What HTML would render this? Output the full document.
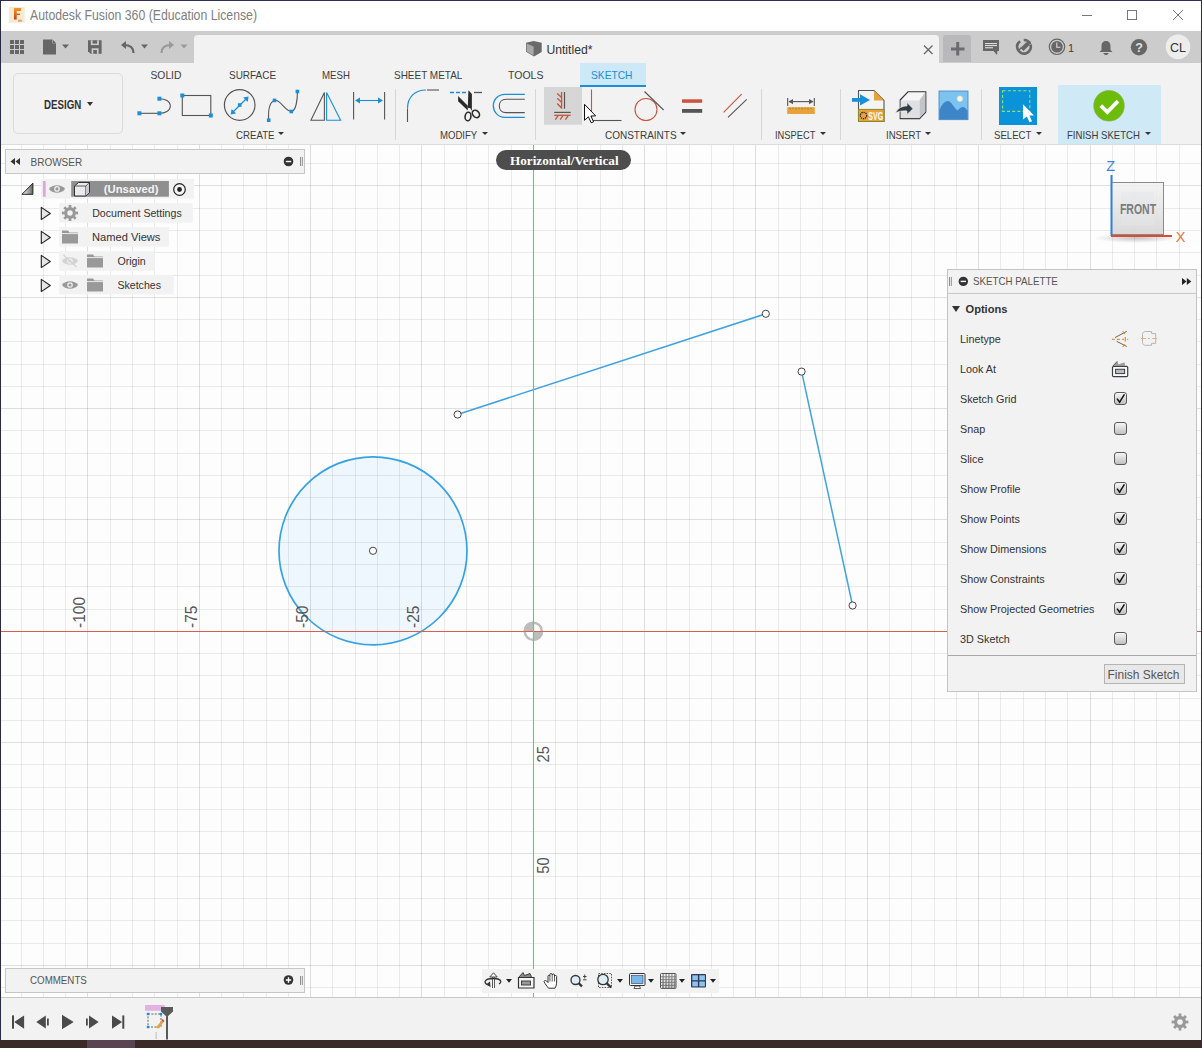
<!DOCTYPE html><html><head><meta charset="utf-8"><title>Fusion</title><style>
*{box-sizing:border-box}
html,body{margin:0;padding:0}
body{width:1202px;height:1048px;position:relative;overflow:hidden;background:#fff;font-family:"Liberation Sans",sans-serif;color:#333}
.a{position:absolute}
.t{position:absolute;white-space:nowrap;line-height:1}
.lbl{font-family:"Liberation Sans",sans-serif;font-size:16px;fill:#555}
.tab{font-size:10.3px;color:#3c3c3c;top:70.5px}
.grp{font-size:10.2px;color:#3c3c3c;top:131px}
.car{display:inline-block;width:0;height:0;border-left:3px solid transparent;border-right:3px solid transparent;border-top:4px solid #333;vertical-align:top;margin-left:3px;position:relative;top:3px}
.row{position:absolute;left:960px;font-size:10.8px;color:#333;white-space:nowrap;line-height:1}
.cb{position:absolute;left:1113.5px;width:13px;height:13px;border:1px solid #5a5a5a;border-radius:3px;background:linear-gradient(#f6f6f6,#c0c0c0)}
.br{position:absolute;font-size:10.6px;color:#333;white-space:nowrap;line-height:1}
</style></head><body>
<svg class="a" style="left:0;top:0" width="1202" height="1048" viewBox="0 0 1202 1048">
<rect x="0" y="145" width="1202" height="852" fill="#fdfdfd"/>
<circle cx="373" cy="550.8" r="94" fill="#eef7fe"/>
<path d="M21.5 145V997" stroke="#000" stroke-opacity="0.075"/>
<path d="M43.5 145V997" stroke="#000" stroke-opacity="0.075"/>
<path d="M65.5 145V997" stroke="#000" stroke-opacity="0.075"/>
<path d="M87.5 145V997" stroke="#000" stroke-opacity="0.12"/>
<path d="M110.5 145V997" stroke="#000" stroke-opacity="0.075"/>
<path d="M132.5 145V997" stroke="#000" stroke-opacity="0.075"/>
<path d="M154.5 145V997" stroke="#000" stroke-opacity="0.075"/>
<path d="M177.5 145V997" stroke="#000" stroke-opacity="0.075"/>
<path d="M199.5 145V997" stroke="#000" stroke-opacity="0.12"/>
<path d="M221.5 145V997" stroke="#000" stroke-opacity="0.075"/>
<path d="M243.5 145V997" stroke="#000" stroke-opacity="0.075"/>
<path d="M266.5 145V997" stroke="#000" stroke-opacity="0.075"/>
<path d="M288.5 145V997" stroke="#000" stroke-opacity="0.075"/>
<path d="M310.5 145V997" stroke="#000" stroke-opacity="0.12"/>
<path d="M332.5 145V997" stroke="#000" stroke-opacity="0.075"/>
<path d="M355.5 145V997" stroke="#000" stroke-opacity="0.075"/>
<path d="M377.5 145V997" stroke="#000" stroke-opacity="0.075"/>
<path d="M399.5 145V997" stroke="#000" stroke-opacity="0.075"/>
<path d="M421.5 145V997" stroke="#000" stroke-opacity="0.12"/>
<path d="M444.5 145V997" stroke="#000" stroke-opacity="0.075"/>
<path d="M466.5 145V997" stroke="#000" stroke-opacity="0.075"/>
<path d="M488.5 145V997" stroke="#000" stroke-opacity="0.075"/>
<path d="M511.5 145V997" stroke="#000" stroke-opacity="0.075"/>
<path d="M555.5 145V997" stroke="#000" stroke-opacity="0.075"/>
<path d="M577.5 145V997" stroke="#000" stroke-opacity="0.075"/>
<path d="M600.5 145V997" stroke="#000" stroke-opacity="0.075"/>
<path d="M622.5 145V997" stroke="#000" stroke-opacity="0.075"/>
<path d="M644.5 145V997" stroke="#000" stroke-opacity="0.12"/>
<path d="M666.5 145V997" stroke="#000" stroke-opacity="0.075"/>
<path d="M689.5 145V997" stroke="#000" stroke-opacity="0.075"/>
<path d="M711.5 145V997" stroke="#000" stroke-opacity="0.075"/>
<path d="M733.5 145V997" stroke="#000" stroke-opacity="0.075"/>
<path d="M755.5 145V997" stroke="#000" stroke-opacity="0.12"/>
<path d="M778.5 145V997" stroke="#000" stroke-opacity="0.075"/>
<path d="M800.5 145V997" stroke="#000" stroke-opacity="0.075"/>
<path d="M822.5 145V997" stroke="#000" stroke-opacity="0.075"/>
<path d="M845.5 145V997" stroke="#000" stroke-opacity="0.075"/>
<path d="M867.5 145V997" stroke="#000" stroke-opacity="0.12"/>
<path d="M889.5 145V997" stroke="#000" stroke-opacity="0.075"/>
<path d="M911.5 145V997" stroke="#000" stroke-opacity="0.075"/>
<path d="M934.5 145V997" stroke="#000" stroke-opacity="0.075"/>
<path d="M956.5 145V997" stroke="#000" stroke-opacity="0.075"/>
<path d="M978.5 145V997" stroke="#000" stroke-opacity="0.12"/>
<path d="M1000.5 145V997" stroke="#000" stroke-opacity="0.075"/>
<path d="M1023.5 145V997" stroke="#000" stroke-opacity="0.075"/>
<path d="M1045.5 145V997" stroke="#000" stroke-opacity="0.075"/>
<path d="M1067.5 145V997" stroke="#000" stroke-opacity="0.075"/>
<path d="M1090.5 145V997" stroke="#000" stroke-opacity="0.12"/>
<path d="M1112.5 145V997" stroke="#000" stroke-opacity="0.075"/>
<path d="M1134.5 145V997" stroke="#000" stroke-opacity="0.075"/>
<path d="M1156.5 145V997" stroke="#000" stroke-opacity="0.075"/>
<path d="M1179.5 145V997" stroke="#000" stroke-opacity="0.075"/>
<path d="M1201.5 145V997" stroke="#000" stroke-opacity="0.12"/>
<path d="M0 163.5H1202" stroke="#000" stroke-opacity="0.075"/>
<path d="M0 185.5H1202" stroke="#000" stroke-opacity="0.12"/>
<path d="M0 208.5H1202" stroke="#000" stroke-opacity="0.075"/>
<path d="M0 230.5H1202" stroke="#000" stroke-opacity="0.075"/>
<path d="M0 252.5H1202" stroke="#000" stroke-opacity="0.075"/>
<path d="M0 275.5H1202" stroke="#000" stroke-opacity="0.075"/>
<path d="M0 297.5H1202" stroke="#000" stroke-opacity="0.12"/>
<path d="M0 319.5H1202" stroke="#000" stroke-opacity="0.075"/>
<path d="M0 341.5H1202" stroke="#000" stroke-opacity="0.075"/>
<path d="M0 364.5H1202" stroke="#000" stroke-opacity="0.075"/>
<path d="M0 386.5H1202" stroke="#000" stroke-opacity="0.075"/>
<path d="M0 408.5H1202" stroke="#000" stroke-opacity="0.12"/>
<path d="M0 430.5H1202" stroke="#000" stroke-opacity="0.075"/>
<path d="M0 453.5H1202" stroke="#000" stroke-opacity="0.075"/>
<path d="M0 475.5H1202" stroke="#000" stroke-opacity="0.075"/>
<path d="M0 497.5H1202" stroke="#000" stroke-opacity="0.075"/>
<path d="M0 519.5H1202" stroke="#000" stroke-opacity="0.12"/>
<path d="M0 542.5H1202" stroke="#000" stroke-opacity="0.075"/>
<path d="M0 564.5H1202" stroke="#000" stroke-opacity="0.075"/>
<path d="M0 586.5H1202" stroke="#000" stroke-opacity="0.075"/>
<path d="M0 609.5H1202" stroke="#000" stroke-opacity="0.075"/>
<path d="M0 653.5H1202" stroke="#000" stroke-opacity="0.075"/>
<path d="M0 675.5H1202" stroke="#000" stroke-opacity="0.075"/>
<path d="M0 698.5H1202" stroke="#000" stroke-opacity="0.075"/>
<path d="M0 720.5H1202" stroke="#000" stroke-opacity="0.075"/>
<path d="M0 742.5H1202" stroke="#000" stroke-opacity="0.12"/>
<path d="M0 764.5H1202" stroke="#000" stroke-opacity="0.075"/>
<path d="M0 787.5H1202" stroke="#000" stroke-opacity="0.075"/>
<path d="M0 809.5H1202" stroke="#000" stroke-opacity="0.075"/>
<path d="M0 831.5H1202" stroke="#000" stroke-opacity="0.075"/>
<path d="M0 853.5H1202" stroke="#000" stroke-opacity="0.12"/>
<path d="M0 876.5H1202" stroke="#000" stroke-opacity="0.075"/>
<path d="M0 898.5H1202" stroke="#000" stroke-opacity="0.075"/>
<path d="M0 920.5H1202" stroke="#000" stroke-opacity="0.075"/>
<path d="M0 943.5H1202" stroke="#000" stroke-opacity="0.075"/>
<path d="M0 965.5H1202" stroke="#000" stroke-opacity="0.12"/>
<path d="M0 987.5H1202" stroke="#000" stroke-opacity="0.075"/>
<circle cx="373" cy="550.8" r="94" fill="none" stroke="#36a2e4" stroke-width="1.7"/>
<line x1="457.6" y1="414.5" x2="765.8" y2="313.8" stroke="#3fa3e0" stroke-width="1.5"/>
<line x1="801.6" y1="371.6" x2="852.6" y2="605.5" stroke="#3fa3e0" stroke-width="1.5"/>
<path d="M0 631.5H1202" stroke="#dd5c52" stroke-width="1"/>
<path d="M533.5 145V997" stroke="#62d05c" stroke-width="1.1"/>
<text transform="translate(85.1,628) rotate(-90) scale(0.97,1)" class="lbl">-100</text>
<text transform="translate(196.5,628) rotate(-90) scale(0.97,1)" class="lbl">-75</text>
<text transform="translate(307.8,628) rotate(-90) scale(0.97,1)" class="lbl">-50</text>
<text transform="translate(419.2,628) rotate(-90) scale(0.97,1)" class="lbl">-25</text>
<text transform="translate(549.3,762.4) rotate(-90) scale(0.92,1)" class="lbl">25</text>
<text transform="translate(549.3,873.8) rotate(-90) scale(0.92,1)" class="lbl">50</text>
<circle cx="373" cy="550.8" r="3.6" fill="#fff" stroke="#444" stroke-width="1"/>
<circle cx="457.6" cy="414.5" r="3.6" fill="#fff" stroke="#444" stroke-width="1"/>
<circle cx="765.8" cy="313.8" r="3.6" fill="#fff" stroke="#444" stroke-width="1"/>
<circle cx="801.6" cy="371.6" r="3.6" fill="#fff" stroke="#444" stroke-width="1"/>
<circle cx="852.6" cy="605.5" r="3.6" fill="#fff" stroke="#444" stroke-width="1"/>
<circle cx="533.3" cy="631.3" r="8.6" fill="none" stroke="#bdbdbd" stroke-width="2.4"/>
<path d="M533.3 631.3 V621.5 A9.8 9.8 0 0 0 523.5 631.3 Z M533.3 631.3 V641.0999999999999 A9.8 9.8 0 0 0 543.0999999999999 631.3 Z" fill="#bdbdbd"/>
<path d="M523.3 631.5 H543.3" stroke="#dd5c52" stroke-width="1"/><path d="M533.5 621.3 V641.3" stroke="#62d05c" stroke-width="1.1"/>
<defs><linearGradient id="cubeg" x1="0" y1="0" x2="0" y2="1"><stop offset="0" stop-color="#f2f2f2" stop-opacity="0.85"/><stop offset="1" stop-color="#d6d6d6" stop-opacity="0.9"/></linearGradient><radialGradient id="shad" cx="0.5" cy="0.5" r="0.5"><stop offset="0" stop-color="#000" stop-opacity="0.22"/><stop offset="1" stop-color="#000" stop-opacity="0"/></radialGradient></defs>
<ellipse cx="1136" cy="238" rx="42" ry="5" fill="url(#shad)"/>
<rect x="1111.5" y="182.5" width="52" height="52" fill="url(#cubeg)" stroke="#8a8a8a" stroke-width="1"/>
<rect x="1121" y="192" width="33" height="33" fill="#e2e5ea" fill-opacity="0.5"/>
<text x="1138" y="214.3" text-anchor="middle" font-family="Liberation Sans" font-weight="700" font-size="15" fill="#7c7c7c" transform="translate(1138 0) scale(0.70 1) translate(-1138 0)">FRONT</text>
<path d="M1111.5 175V236" stroke="#2f7fdc" stroke-width="2"/>
<path d="M1111 236H1172" stroke="#dc4a3a" stroke-width="2"/>
<text x="1110.8" y="171.2" text-anchor="middle" font-family="Liberation Sans" font-size="14.5" fill="#3a86e0">Z</text>
<text x="1180.5" y="241.5" text-anchor="middle" font-family="Liberation Sans" font-size="14.5" fill="#e8753a">X</text>
</svg>
<div class="a" style="left:0;top:0;width:1202px;height:31px;background:#fff"></div>
<div class="t" style="left:30px;top:8px;font-size:14px;color:#808080;transform-origin:0 0;transform:scaleX(0.876)">Autodesk Fusion 360 (Education License)</div>
<div class="a" style="left:1082px;top:15px;width:10px;height:1px;background:#777"></div>
<div class="a" style="left:1127px;top:10px;width:10px;height:10px;border:1px solid #777"></div>
<svg class="a" style="left:1172px;top:9px" width="12" height="12"><path d="M1 1L11 11M11 1L1 11" stroke="#777" stroke-width="1"/></svg>
<div class="a" style="left:0;top:31px;width:1202px;height:32px;background:#cbcccb"></div>
<div class="a" style="left:194px;top:35px;width:745px;height:28px;background:#f2f2f2;border-radius:4px 4px 0 0"></div>
<div class="a" style="left:943px;top:35px;width:28px;height:27px;background:#b9b9bb;border-radius:3px 3px 0 0"></div>
<div class="t" style="left:546.4px;top:43.5px;font-size:12.2px;color:#333">Untitled*</div>
<div class="a" style="left:0;top:63px;width:1202px;height:82px;background:#f2f2f2"></div>
<div class="a" style="left:12.5px;top:73px;width:110px;height:61px;border:1px solid #dadada;border-radius:5px;background:#f2f2f2"></div>
<div class="t" style="left:43.5px;top:99px;font-size:12px;font-weight:700;color:#333;transform-origin:0 0;transform:scaleX(0.81)">DESIGN</div>
<div class="a" style="left:87px;top:102px;width:0;height:0;border-left:3px solid transparent;border-right:3px solid transparent;border-top:4px solid #333"></div>
<div class="a" style="left:579.5px;top:63px;width:66px;height:24px;background:#cde8f6"></div>
<div class="a" style="left:579.5px;top:84.7px;width:66px;height:2.5px;background:#1a8fd6"></div>
<div class="t tab" style="left:150.5px;color:#3c3c3c;transform-origin:0 0;transform:scaleX(1.000)">SOLID</div>
<div class="t tab" style="left:228.7px;color:#3c3c3c;transform-origin:0 0;transform:scaleX(0.969)">SURFACE</div>
<div class="t tab" style="left:321.8px;color:#3c3c3c;transform-origin:0 0;transform:scaleX(0.936)">MESH</div>
<div class="t tab" style="left:394.2px;color:#3c3c3c;transform-origin:0 0;transform:scaleX(0.969)">SHEET METAL</div>
<div class="t tab" style="left:507.6px;color:#3c3c3c;transform-origin:0 0;transform:scaleX(1.020)">TOOLS</div>
<div class="t tab" style="left:591.4px;color:#1a8fd6;transform-origin:0 0;transform:scaleX(0.993)">SKETCH</div>
<div class="a" style="left:1058px;top:85px;width:103px;height:60px;background:#cfe9f6"></div>
<div class="t grp" style="left:235.5px;transform-origin:0 0;transform:scaleX(0.949)">CREATE</div>
<div class="a" style="left:278.3px;top:132.3px;width:0;height:0;border-left:3px solid transparent;border-right:3px solid transparent;border-top:3.8px solid #333"></div>
<div class="t grp" style="left:439.7px;transform-origin:0 0;transform:scaleX(0.940)">MODIFY</div>
<div class="a" style="left:481.6px;top:132.3px;width:0;height:0;border-left:3px solid transparent;border-right:3px solid transparent;border-top:3.8px solid #333"></div>
<div class="t grp" style="left:604.6px;transform-origin:0 0;transform:scaleX(0.980)">CONSTRAINTS</div>
<div class="a" style="left:680.1px;top:132.3px;width:0;height:0;border-left:3px solid transparent;border-right:3px solid transparent;border-top:3.8px solid #333"></div>
<div class="t grp" style="left:774.7px;transform-origin:0 0;transform:scaleX(0.915)">INSPECT</div>
<div class="a" style="left:819.5px;top:132.3px;width:0;height:0;border-left:3px solid transparent;border-right:3px solid transparent;border-top:3.8px solid #333"></div>
<div class="t grp" style="left:886.2px;transform-origin:0 0;transform:scaleX(0.944)">INSERT</div>
<div class="a" style="left:925.4px;top:132.3px;width:0;height:0;border-left:3px solid transparent;border-right:3px solid transparent;border-top:3.8px solid #333"></div>
<div class="t grp" style="left:993.8px;transform-origin:0 0;transform:scaleX(0.943)">SELECT</div>
<div class="a" style="left:1036px;top:132.3px;width:0;height:0;border-left:3px solid transparent;border-right:3px solid transparent;border-top:3.8px solid #333"></div>
<div class="t grp" style="left:1067.4px;transform-origin:0 0;transform:scaleX(0.940)">FINISH SKETCH</div>
<div class="a" style="left:1145px;top:132.3px;width:0;height:0;border-left:3px solid transparent;border-right:3px solid transparent;border-top:3.8px solid #333"></div>
<div class="a" style="left:395px;top:89px;width:1px;height:51px;background:#d6d6d6"></div>
<div class="a" style="left:535px;top:89px;width:1px;height:51px;background:#d6d6d6"></div>
<div class="a" style="left:761px;top:89px;width:1px;height:51px;background:#d6d6d6"></div>
<div class="a" style="left:840px;top:89px;width:1px;height:51px;background:#d6d6d6"></div>
<div class="a" style="left:980.5px;top:89px;width:1px;height:51px;background:#d6d6d6"></div>
<svg class="a" style="left:0;top:0" width="1202" height="145" viewBox="0 0 1202 145">
<rect x="10" y="40" width="4" height="4" fill="#666"/>
<rect x="10" y="45" width="4" height="4" fill="#666"/>
<rect x="10" y="50" width="4" height="4" fill="#666"/>
<rect x="15" y="40" width="4" height="4" fill="#666"/>
<rect x="15" y="45" width="4" height="4" fill="#666"/>
<rect x="15" y="50" width="4" height="4" fill="#666"/>
<rect x="20" y="40" width="4" height="4" fill="#666"/>
<rect x="20" y="45" width="4" height="4" fill="#666"/>
<rect x="20" y="50" width="4" height="4" fill="#666"/>
<path d="M43 39.5 H52.5 L56 43 V54.5 H43 Z" fill="#666"/><path d="M52.5 39.5 V43 H56" fill="#cbcccb" stroke="#cbcccb" stroke-width="0.6"/><path d="M52.6 39.8 L52.6 43 L55.8 43Z" fill="#666"/>
<path d="M62 44.5 H69 L65.5 48.5Z" fill="#666"/>
<path d="M88 40.3 H101.6 V53.8 H90.5 L88 51.3 Z" fill="#666"/><rect x="90.8" y="40.3" width="8.1" height="4.8" fill="#cbcccb"/><rect x="92.6" y="40.3" width="4.5" height="3.3" fill="#666"/><rect x="91.6" y="48.3" width="7" height="5.5" fill="#cbcccb"/><rect x="93.3" y="50" width="3.6" height="3.8" fill="#666"/>
<path d="M133.5 53 C133.5 47 130 45 124 45" fill="none" stroke="#666" stroke-width="2.2"/><path d="M121 45 L126 41 L126 49Z" fill="#666"/>
<path d="M141 44.5 H148 L144.5 48.5Z" fill="#666"/>
<path d="M161.5 53 C161.5 47 165 45 171 45" fill="none" stroke="#9a9a9a" stroke-width="2.2"/><path d="M174 45 L169 41 L169 49Z" fill="#9a9a9a"/>
<path d="M180.5 44.5 H187.5 L184 48.5Z" fill="#9a9a9a"/>
<path d="M526 42.7 L533.7 41 L541.7 42.7 V52 L534 56.5 L526 51.7 Z" fill="#6a6a6a"/><path d="M526.6 43.6 L533.6 46.6 V55.6 L526.6 51.4Z" fill="#a9a9a9"/>
<path d="M924 45.5 L932.5 54 M932.5 45.5 L924 54" stroke="#666" stroke-width="1.3"/>
<rect x="951" y="47.5" width="13.5" height="3" fill="#6c6c70"/><rect x="956.2" y="42" width="3" height="13.5" fill="#6c6c70"/>
<rect x="983" y="40" width="16" height="11" fill="#666"/><path d="M993 50.5 L997.5 50.5 L997 55Z" fill="#666"/><rect x="985" y="43" width="12" height="1.1" fill="#ddd"/><rect x="985" y="45" width="12" height="1.1" fill="#ddd"/><rect x="985" y="47.2" width="8" height="1.1" fill="#ddd"/>
<circle cx="1024" cy="46.8" r="6.8" fill="none" stroke="#666" stroke-width="2.6" stroke-dasharray="30 4 8 4" transform="rotate(-20 1024 46.8)"/>
<path d="M1020.5 48 L1026 42.5 L1030.5 41 L1029 45.5 L1023.5 51Z" fill="#666"/><path d="M1019 50 L1021.5 47.5" stroke="#666" stroke-width="1.5"/>
<circle cx="1057" cy="46.8" r="7.7" fill="none" stroke="#666" stroke-width="1.2"/><circle cx="1057" cy="46.8" r="5.8" fill="#666"/><path d="M1056.8 42.5 V47.3 H1060.5" fill="none" stroke="#ddd" stroke-width="1.1"/>
<text x="1068" y="52" font-family="Liberation Sans" font-size="11" fill="#4a3a3a">1</text>
<path d="M1099.5 52 L1101.5 50 L1101.5 46 C1101.5 42.5 1103.5 41 1106 41 C1108.5 41 1110.5 42.5 1110.5 46 L1110.5 50 L1112.5 52 Z" fill="#666"/><path d="M1103.5 53 H1108.5 C1108.5 54.5 1107 55 1106 55 C1105 55 1103.5 54.5 1103.5 53Z" fill="#666"/>
<circle cx="1139" cy="47.2" r="8.2" fill="#666"/><text x="1139" y="51.8" text-anchor="middle" font-family="Liberation Sans" font-weight="700" font-size="12.5" fill="#e0e0e0">?</text>
<circle cx="1178" cy="46.8" r="12.3" fill="#ededed"/><text x="1178" y="51.5" text-anchor="middle" font-family="Liberation Sans" font-size="12.5" fill="#333">CL</text>
<defs><linearGradient id="fg" x1="0" y1="0" x2="0" y2="1"><stop offset="0" stop-color="#f29a2a"/><stop offset="1" stop-color="#c83a1e"/></linearGradient></defs><rect x="9" y="7" width="15.7" height="15.7" fill="#f6ebcf"/><path d="M14 8 H21 V11 H16.7 V13.4 H20 V15.1 H16.7 V19.6 H14Z" fill="url(#fg)"/><rect x="18" y="19.7" width="4" height="2" fill="#e8a070"/>
<path d="M139.4 113.3 H159.4" stroke="#555" stroke-width="1.1"/><path d="M159.4 98.7 C165 98.7 170.3 101 170.3 106 C170.3 111 165 113.3 159.4 113.3" fill="none" stroke="#555" stroke-width="1.1"/>
<rect x="137.4" y="111.3" width="4" height="4" fill="#1a8fd6"/>
<rect x="157.4" y="111.3" width="4" height="4" fill="#1a8fd6"/>
<rect x="157.4" y="96.7" width="4" height="4" fill="#1a8fd6"/>
<rect x="182.3" y="95.5" width="28.5" height="20" fill="none" stroke="#555" stroke-width="1.1"/>
<rect x="180.3" y="93.5" width="4" height="4" fill="#1a8fd6"/>
<rect x="208.8" y="113.5" width="4" height="4" fill="#1a8fd6"/>
<circle cx="239.7" cy="105" r="15.3" fill="none" stroke="#555" stroke-width="1.2"/>
<path d="M232 113 L247.5 97.5" stroke="#1a8fd6" stroke-width="1.2"/><path d="M230.7 114.4 L231.6 109 L236.1 113.5Z" fill="#1a8fd6"/><path d="M248.6 96.5 L247.7 102 L243.2 97.4Z" fill="#1a8fd6"/>
<rect x="237.89999999999998" y="103.2" width="3.6" height="3.6" fill="#1a8fd6"/>
<path d="M268.7 120.2 C268 110 270 102 274.5 100.4 C280 99 285 111 291.3 111.5 C296 111 297.5 100 297.4 91.5" fill="none" stroke="#555" stroke-width="1.1"/>
<rect x="266.9" y="118.4" width="3.6" height="3.6" fill="#1a8fd6"/>
<rect x="272.7" y="98.60000000000001" width="3.6" height="3.6" fill="#1a8fd6"/>
<rect x="289.5" y="109.7" width="3.6" height="3.6" fill="#1a8fd6"/>
<rect x="295.59999999999997" y="89.7" width="3.6" height="3.6" fill="#1a8fd6"/>
<path d="M310.9 120.2 L324.4 92.6 L324.4 120.2 Z" fill="none" stroke="#555" stroke-width="1.1"/><path d="M326.6 120.2 L326.6 92.6 L340.6 120.2 Z" fill="none" stroke="#1a8fd6" stroke-width="1.1"/>
<path d="M353.6 92 V119.5 M384.6 92 V119.5" stroke="#555" stroke-width="1.1"/><path d="M356 100.5 H382" stroke="#1a8fd6" stroke-width="1.1"/><path d="M355 100.5 L360 97.5 L360 103.5Z M383 100.5 L378 97.5 L378 103.5Z" fill="#1a8fd6"/>
<path d="M407.5 122 V108.5" stroke="#555" stroke-width="1.1"/><path d="M407.5 108.5 C407.5 97 415 90 426 90" fill="none" stroke="#1a8fd6" stroke-width="1.2"/><path d="M427 90 H439" stroke="#555" stroke-width="1.1"/>
<path d="M450 92.5 H466" stroke="#1a8fd6" stroke-width="1.3" stroke-dasharray="4 2"/><path d="M474 92.5 H482" stroke="#555" stroke-width="1.3"/>
<path d="M468.4 90.2 L471.9 94 V110.4 L467.8 107.4Z" fill="#2a2a2a"/><path d="M458.1 96.1 L467.8 105.8 V110.4 L458.1 101.3Z" fill="#2a2a2a"/><circle cx="469.4" cy="109.5" r="1.4" fill="#f2f2f2"/>
<ellipse cx="468" cy="116.5" rx="2.9" ry="4.3" fill="none" stroke="#2a2a2a" stroke-width="1.6" transform="rotate(8 468 116.5)"/><ellipse cx="475.9" cy="113.9" rx="3.1" ry="4.1" fill="none" stroke="#2a2a2a" stroke-width="1.6" transform="rotate(-42 475.9 113.9)"/>
<path d="M524.8 94.4 H505 C498 94.4 493.3 99.5 493.3 105.8 C493.3 112 498 117.3 505 117.3 H524.8" fill="none" stroke="#1a8fd6" stroke-width="1.3"/>
<path d="M524.8 99.3 H506 C502 99.3 499.3 102 499.3 106 C499.3 110 502 112.6 506 112.6 H524.8" fill="none" stroke="#555" stroke-width="1.1"/>
<rect x="544" y="87" width="38" height="37.7" fill="#d6d6d6"/>
<path d="M561.6 91.9 V108.7" stroke="#c8553d" stroke-width="1.3"/><path d="M564.5 92 V108.7" stroke="#555" stroke-width="1.2"/>
<path d="M557.2 93.4 L561.6 97.5 M557.2 98.2 L561.6 102.3 M557.2 103.5 L561.6 108" stroke="#c8553d" stroke-width="1.4" fill="none"/>
<path d="M554.2 112.4 H570.7" stroke="#555" stroke-width="1.2"/><path d="M554.2 115.3 H570.7" stroke="#c8553d" stroke-width="1.3"/><path d="M555.3 119.6 L558 115.8 M560.2 119.6 L562.8 115.8 M565.4 119.6 L568 115.8" stroke="#c8553d" stroke-width="1.4"/>
<path d="M591.5 89.5 V120" stroke="#c8553d" stroke-width="1.1"/><path d="M591 120.5 H621.5" stroke="#555" stroke-width="1.1"/>
<path d="M584.5 104.3 L584.5 120.3 L588.4 116.8 L591.2 122.8 L593.6 121.8 L590.9 116 L595.7 115.9 Z" fill="#fff" stroke="#111" stroke-width="1"/>
<circle cx="646" cy="109.5" r="11" fill="none" stroke="#c8553d" stroke-width="1.1"/><path d="M644.5 91.5 L663.6 110" stroke="#555" stroke-width="1.1"/>
<rect x="682" y="99.3" width="20.2" height="3.5" fill="#c8553d"/><rect x="682" y="109" width="20.2" height="3.8" fill="#555"/>
<path d="M723.6 112.4 L741.6 94.2" stroke="#c8553d" stroke-width="1.1"/><path d="M728 117.3 L746.7 99.3" stroke="#555" stroke-width="1.1"/>
<rect x="787.2" y="107.2" width="27.6" height="6.8" fill="#e8a23a"/>
<path d="M790 107.5 V109.5 M793 107.5 V109 M796 107.5 V109.5 M799 107.5 V109 M802 107.5 V109.5 M805 107.5 V109 M808 107.5 V109.5 M811 107.5 V109" stroke="#a8701a" stroke-width="0.8"/>
<path d="M787.7 98 V106 M814.3 98 V106" stroke="#555" stroke-width="1.1"/><path d="M789 101.6 H813" stroke="#555" stroke-width="1.1"/><path d="M788.5 101.6 L793 99 L793 104.2Z M813.5 101.6 L809 99 L809 104.2Z" fill="#555"/>
<path d="M858.5 90.5 H874 L884 100.5 V121.5 H858.5 Z" fill="#f4f4f4" stroke="#555" stroke-width="1.1"/>
<path d="M874 90.5 L884 100.5 H874Z" fill="#e8a23a"/>
<rect x="858.5" y="109.4" width="25.5" height="12.1" fill="#e8a23a" stroke="#8a8a2a" stroke-width="1"/>
<text x="868.3" y="120.2" font-family="Liberation Sans" font-weight="700" font-size="10" fill="#fff" transform="translate(868.3 0) scale(0.7 1) translate(-868.3 0)">SVG</text>
<circle cx="863.5" cy="115.5" r="3.2" fill="none" stroke="#222" stroke-width="1.2" stroke-dasharray="1.3 0.8"/>
<rect x="852" y="98" width="8" height="3.8" fill="#1a8fd6"/><path d="M860 94.3 L870 100 L860 105.6Z" fill="#1a8fd6"/>
<path d="M900.2 100 L908 91.8 H925.8 V112 L919.6 118.6 H900.2 Z" fill="#f6f6f6" stroke="#333" stroke-width="1.1"/>
<path d="M900.7 100.5 H919.6 V118.1 H900.7Z" fill="#dfe0e2"/><path d="M919.6 100 L925.3 92.3 V111.8 L919.6 118.1Z" fill="#c4c5c8"/>
<path d="M895.5 113 C898 108 902 106 907 106 L907 102.5 L913 108.7 L907 114.5 L907 111 C902 110.5 899 111.5 895.5 113Z" fill="#333c44" stroke="#f2f2f2" stroke-width="0.6"/>
<rect x="939" y="91" width="29" height="28.7" fill="#7dc3f0" stroke="#3d85c6" stroke-width="0.8"/>
<path d="M939.4 110 C942 104 945 101 948 101 C951 101 954 108 957.5 110.5 C959 109 961 107 963 107 C965 107 967 110 967.6 111 V119.3 H939.4Z" fill="#3d85c6"/>
<circle cx="959.9" cy="98.8" r="3" fill="#fdf6d8" stroke="#9bc8ea" stroke-width="0.5"/>
<rect x="999" y="87" width="38" height="38" fill="#0a93d8"/>
<rect x="1002.6" y="90.8" width="27.2" height="20.6" fill="none" stroke="#9ee06a" stroke-width="1.1" stroke-dasharray="3 2.2"/>
<path d="M1023 104.3 L1023 119.5 L1026.8 116.4 L1029.5 122.3 L1032 121.2 L1029.4 115.6 L1034 115.5 Z" fill="#fff"/>
<circle cx="1109" cy="105.8" r="15.5" fill="#6cbc0a" stroke="#a8a8a8" stroke-width="0.4"/>
<path d="M1100.8 105.6 L1107.4 112 L1118 101.2" fill="none" stroke="#fff" stroke-width="3.8"/>
</svg>
<div class="a" style="left:0;top:144px;width:1202px;height:1px;background:#dcdcdc"></div>
<div class="a" style="left:5px;top:149px;width:300px;height:25px;background:#f2f2f2;border:1px solid #c6c6c6"></div>
<div class="t" style="left:30.5px;top:157.5px;font-size:10px;color:#555">BROWSER</div>
<svg class="a" style="left:0;top:145px" width="320" height="160" viewBox="0 145 320 160">
<defs><linearGradient id="tg" x1="0" y1="0" x2="1" y2="0"><stop offset="0" stop-color="#fff"/><stop offset="1" stop-color="#666"/></linearGradient></defs>
<path d="M10.5 161.5 L15 158 V165Z M15.5 161.5 L20 158 V165Z" fill="#333"/>
<circle cx="288.5" cy="161.5" r="4.8" fill="#333"/><rect x="285.8" y="160.8" width="5.4" height="1.4" fill="#fff"/>
<path d="M300.5 157 V166 M302.3 157 V166" stroke="#777" stroke-width="0.8"/>
<rect x="41" y="179" width="153" height="19.7" fill="#f2f2f2"/>
<rect x="59.2" y="203.1" width="133.7" height="19.6" fill="#f2f2f2"/>
<rect x="59.2" y="227.1" width="109.7" height="19.6" fill="#f2f2f2"/>
<rect x="59.2" y="251.2" width="95.3" height="19.6" fill="#f2f2f2"/>
<rect x="59.2" y="274.8" width="114.6" height="19.6" fill="#f2f2f2"/>
<path d="M22 194.3 L32.9 183.2 L32.9 194.3 Z" fill="url(#tg)" stroke="#222" stroke-width="1" stroke-linejoin="round"/>
<rect x="42.9" y="181" width="2.8" height="15.7" fill="#dda6dd"/>
<path d="M49 188.9 C52 183.9 62 183.9 65 188.9 C62 193.9 52 193.9 49 188.9Z" fill="#999"/><circle cx="57" cy="188.9" r="2.8" fill="#f2f2f2"/><circle cx="57" cy="188.9" r="1.6" fill="#999"/>
<rect x="71.2" y="181" width="97.7" height="15.7" fill="#8f8f8f"/>
<path d="M74.5 196 V186 L78.5 182.5 H89.5 V192.5 L85.8 196 Z" fill="#e8eaec" stroke="#333" stroke-width="1"/><path d="M74.5 186 H85.8 V196 M85.8 186 L89.5 182.5" fill="none" stroke="#333" stroke-width="0.8"/><path d="M86.3 186.3 L89 183.5 V192.3 L86.3 195.3Z" fill="#c9cbce"/>
<circle cx="179.5" cy="189.5" r="5.8" fill="#f6f6f6" stroke="#222" stroke-width="1.2"/><circle cx="179.5" cy="189.5" r="2.4" fill="#222"/>
<path d="M41.3 207.4 L41.3 219.6 L50.3 213.5 Z" fill="#e6e6e6" stroke="#222" stroke-width="1.1" stroke-linejoin="round"/>
<path d="M41.3 231.4 L41.3 243.6 L50.3 237.5 Z" fill="#e6e6e6" stroke="#222" stroke-width="1.1" stroke-linejoin="round"/>
<path d="M41.3 255.4 L41.3 267.6 L50.3 261.5 Z" fill="#e6e6e6" stroke="#222" stroke-width="1.1" stroke-linejoin="round"/>
<path d="M41.3 279.4 L41.3 291.59999999999997 L50.3 285.5 Z" fill="#e6e6e6" stroke="#222" stroke-width="1.1" stroke-linejoin="round"/>
<polygon points="78.08,211.61 78.08,214.39 75.76,214.30 74.99,216.15 76.70,217.73 74.73,219.70 73.15,217.99 71.30,218.76 71.39,221.08 68.61,221.08 68.70,218.76 66.85,217.99 65.27,219.70 63.30,217.73 65.01,216.15 64.24,214.30 61.92,214.39 61.92,211.61 64.24,211.70 65.01,209.85 63.30,208.27 65.27,206.30 66.85,208.01 68.70,207.24 68.61,204.92 71.39,204.92 71.30,207.24 73.15,208.01 74.73,206.30 76.70,208.27 74.99,209.85 75.76,211.70" fill="#999"/><circle cx="70" cy="213" r="2.71" fill="#f2f2f2"/>
<path d="M62 230.4 H68 L69.5 232.4 H78 V243.4 H62 Z" fill="#999"/><path d="M62 233.6 H78" stroke="#f2f2f2" stroke-width="0.9"/>
<g opacity="0.35"><path d="M62 261 C65 256 75 256 78 261 C75 266 65 266 62 261Z" fill="#999"/><circle cx="70" cy="261" r="2.8" fill="#f2f2f2"/><circle cx="70" cy="261" r="1.6" fill="#999"/><path d="M63.5 255 L76.5 267" stroke="#999" stroke-width="1.2"/></g>
<path d="M87 254.4 H93 L94.5 256.4 H103 V267.4 H87 Z" fill="#999"/><path d="M87 257.6 H103" stroke="#f2f2f2" stroke-width="0.9"/>
<path d="M62 285 C65 280 75 280 78 285 C75 290 65 290 62 285Z" fill="#999"/><circle cx="70" cy="285" r="2.8" fill="#f2f2f2"/><circle cx="70" cy="285" r="1.6" fill="#999"/>
<path d="M87 278.4 H93 L94.5 280.4 H103 V291.4 H87 Z" fill="#999"/><path d="M87 281.59999999999997 H103" stroke="#f2f2f2" stroke-width="0.9"/>
</svg>
<div class="t" style="left:103.8px;top:184.3px;font-size:11.3px;font-weight:700;color:#f4f4f4">(Unsaved)</div>
<div class="br" style="left:92.2px;top:208px;transform-origin:0 0;transform:scaleX(1.0)">Document Settings</div>
<div class="br" style="left:92.2px;top:232px;transform-origin:0 0;transform:scaleX(1.05)">Named Views</div>
<div class="br" style="left:117.4px;top:256px;transform-origin:0 0;transform:scaleX(1.0)">Origin</div>
<div class="br" style="left:117.4px;top:280px;transform-origin:0 0;transform:scaleX(1.0)">Sketches</div>
<div class="a" style="left:496px;top:150px;width:135px;height:20px;background:#4d4d4d;border-radius:10px"></div>
<div class="t" style="left:509.5px;top:155.5px;font-family:'Liberation Serif',serif;font-weight:700;font-size:11.6px;color:#fff;transform-origin:0 0;transform:scaleX(1.137)">Horizontal/Vertical</div>
<div class="a" style="left:947px;top:269px;width:250px;height:423px;background:#f2f2f2;border:1px solid #c4c4c4"></div>
<div class="a" style="left:948px;top:293px;width:248px;height:1px;background:#c8c8c8"></div>
<div class="t" style="left:972.5px;top:276px;font-size:10.6px;color:#555;transform-origin:0 0;transform:scaleX(0.92)">SKETCH PALETTE</div>
<div class="t" style="left:965.5px;top:304px;font-size:11.1px;font-weight:700;color:#333">Options</div>
<div class="a" style="left:952.4px;top:306px;width:0;height:0;border-left:4.2px solid transparent;border-right:4.2px solid transparent;border-top:6.5px solid #333"></div>
<svg class="a" style="left:940px;top:265px" width="262" height="120" viewBox="940 265 262 120">
<path d="M949.5 277 V286 M951.3 277 V286" stroke="#777" stroke-width="0.8"/>
<circle cx="963.3" cy="281.4" r="4.7" fill="#333"/><rect x="960.6" y="280.7" width="5.4" height="1.4" fill="#fff"/>
<path d="M1182 278 L1186.5 281.5 L1182 285Z M1186.8 278 L1191.3 281.5 L1186.8 285Z" fill="#222"/>
<path d="M1115 337.6 L1126.8 331.3 M1116.7 341.3 L1126.8 346.5" stroke="#555" stroke-width="0.9"/>
<path d="M1111.9 339.3 H1114.7 M1117 339.3 H1119.9 M1122.2 339.3 H1123.9 M1125.3 337 V341.6 M1127.2 339.3 H1128.2" stroke="#e8902a" stroke-width="1.3"/>
<path d="M1122.7 331.3 L1125 333.8 M1122.7 346.8 L1125 344.3" stroke="#e8902a" stroke-width="1.2"/>
<path d="M1151.6 331.5 H1145.5 C1143.8 331.5 1142.5 332.8 1142.5 334.5 V342.5 C1142.5 344.2 1143.8 345.3 1145.5 345.3 H1151.6 V343.3 H1155.7 V333.6 H1151.6 Z" fill="none" stroke="#b4b4b4" stroke-width="1"/>
<path d="M1141 338.5 H1146 M1148 338.5 H1150 M1152.2 338.5 H1156.8" stroke="#f0b070" stroke-width="1.1"/>
<rect x="1112.5" y="366.4" width="15.2" height="10.2" rx="1.2" fill="#fafafa" stroke="#3a3f4a" stroke-width="1.2"/><rect x="1115.6" y="369.3" width="9" height="4.3" fill="#bdbdbd" stroke="#3a3f4a" stroke-width="1"/>
<path d="M1112.9 366 L1117.3 361.3 L1118.5 364.5 L1123.9 362.5 L1124.7 362.8 L1125 366 Z" fill="#9a9a9a"/><path d="M1112.9 366 L1117.3 361.3" stroke="#444" stroke-width="0.8"/>
</svg>
<div class="row" style="top:333.5px">Linetype</div>
<div class="row" style="top:363.5px">Look At</div>
<div class="row" style="top:393.5px">Sketch Grid</div>
<div class="cb" style="top:392px"></div>
<svg class="a" style="left:1113.5px;top:392px" width="13" height="13"><path d="M3 6.6 L5.6 10.2 L10.4 2.4" fill="none" stroke="#111" stroke-width="1.5"/></svg>
<div class="row" style="top:423.5px">Snap</div>
<div class="cb" style="top:422px"></div>
<div class="row" style="top:453.5px">Slice</div>
<div class="cb" style="top:452px"></div>
<div class="row" style="top:483.5px">Show Profile</div>
<div class="cb" style="top:482px"></div>
<svg class="a" style="left:1113.5px;top:482px" width="13" height="13"><path d="M3 6.6 L5.6 10.2 L10.4 2.4" fill="none" stroke="#111" stroke-width="1.5"/></svg>
<div class="row" style="top:513.5px">Show Points</div>
<div class="cb" style="top:512px"></div>
<svg class="a" style="left:1113.5px;top:512px" width="13" height="13"><path d="M3 6.6 L5.6 10.2 L10.4 2.4" fill="none" stroke="#111" stroke-width="1.5"/></svg>
<div class="row" style="top:543.5px">Show Dimensions</div>
<div class="cb" style="top:542px"></div>
<svg class="a" style="left:1113.5px;top:542px" width="13" height="13"><path d="M3 6.6 L5.6 10.2 L10.4 2.4" fill="none" stroke="#111" stroke-width="1.5"/></svg>
<div class="row" style="top:573.5px">Show Constraints</div>
<div class="cb" style="top:572px"></div>
<svg class="a" style="left:1113.5px;top:572px" width="13" height="13"><path d="M3 6.6 L5.6 10.2 L10.4 2.4" fill="none" stroke="#111" stroke-width="1.5"/></svg>
<div class="row" style="top:603.5px">Show Projected Geometries</div>
<div class="cb" style="top:602px"></div>
<svg class="a" style="left:1113.5px;top:602px" width="13" height="13"><path d="M3 6.6 L5.6 10.2 L10.4 2.4" fill="none" stroke="#111" stroke-width="1.5"/></svg>
<div class="row" style="top:633.5px">3D Sketch</div>
<div class="cb" style="top:632px"></div>
<div class="a" style="left:948px;top:655px;width:248px;height:1px;background:#a8a8a8"></div>
<div class="a" style="left:1103.5px;top:664px;width:81px;height:20px;background:#e8e8e8;border:1px solid #b4b4b4"></div>
<div class="t" style="left:1107.5px;top:668.5px;font-size:12px;color:#555">Finish Sketch</div>
<div class="a" style="left:5px;top:968px;width:300px;height:25px;background:#f2f2f2;border:1px solid #c6c6c6"></div>
<div class="t" style="left:30px;top:976px;font-size:10px;color:#555;transform-origin:0 0;transform:scaleX(0.975)">COMMENTS</div>
<svg class="a" style="left:280px;top:972px" width="25" height="18"><circle cx="8.5" cy="8" r="4.8" fill="#333"/><path d="M5.8 8H11.2M8.5 5.3V10.7" stroke="#fff" stroke-width="1.4"/><path d="M20.5 4V13M22.3 4V13" stroke="#777" stroke-width="0.8"/></svg>
<div class="a" style="left:482px;top:969px;width:237px;height:24px;background:#f2f2f2"></div>
<svg class="a" style="left:470px;top:965px" width="260" height="32" viewBox="470 965 260 32">
<path d="M493.5 988 V975.5" stroke="#333" stroke-width="2.6"/><path d="M493.5 988 V975.5" stroke="#fff" stroke-width="1"/><path d="M489.8 977 L493.5 972.8 L497.2 977Z" fill="#fff" stroke="#333" stroke-width="0.9"/>
<path d="M487 984.5 C483 982 485 978.5 493.5 978.5 C501 978.5 502.5 982 499 984" fill="none" stroke="#333" stroke-width="1.3"/><path d="M486 984.5 L490 981.5 L490.5 987Z" fill="#333"/>
<path d="M506 979 H512 L509 982.8Z" fill="#222"/>
<path d="M518.5 977.5 H534 V988 H518.5Z" fill="#f4f4f4" stroke="#333" stroke-width="1.2"/><rect x="521.5" y="981" width="9" height="4" fill="#999" stroke="#333" stroke-width="0.9"/>
<path d="M519 977 L523 972.5 L524.5 975.5 L530 973.5 L531.5 977" fill="#888" stroke="#333" stroke-width="0.9"/>
<path d="M548.5 988.2 C547 986 545 984 544.2 981.8 C543.8 980.6 545.4 980 546.6 981 L548 982.6 V976.2 C548 974.9 549.9 974.9 549.9 976.2 V974.6 C549.9 973.2 552.2 973.2 552.2 974.6 V975 C552.2 973.6 554.5 973.6 554.5 975 V976.4 C554.5 975.2 556.6 975.2 556.6 976.4 V982 C556.6 984.5 556 986.5 555 988.2 Z" fill="#fff" stroke="#333" stroke-width="1"/>
<path d="M549.9 976.2 V981.5 M552.2 975 V981.5 M554.5 976.4 V981.5" stroke="#333" stroke-width="0.8"/>
<circle cx="575.5" cy="980" r="4.5" fill="#dfeef6" stroke="#333" stroke-width="1.3"/><path d="M578.5 983 L582 986.5" stroke="#333" stroke-width="2.4"/><path d="M583 976.5 H586.5 M584.75 974.5 V978.5 M583 979.8 H586.5" stroke="#333" stroke-width="0.9"/>
<rect x="598.5" y="973.5" width="13" height="14" fill="none" stroke="#444" stroke-width="0.9" stroke-dasharray="1.5 1.2"/><circle cx="603" cy="979.5" r="5.2" fill="#dfeef6" stroke="#333" stroke-width="1.3"/><path d="M606.5 983 L611 987.5" stroke="#333" stroke-width="2.4"/>
<path d="M617 979 H623 L620 982.8Z" fill="#222"/>
<rect x="629.5" y="973.5" width="15.5" height="12" rx="1" fill="#f4f4f4" stroke="#333" stroke-width="1"/><rect x="631.5" y="975.5" width="11.5" height="8" fill="#7ab8e8" stroke="#2a3a6a" stroke-width="0.6"/><path d="M634 988.5 H640.5 L639.5 986 H635Z" fill="#fff" stroke="#333" stroke-width="0.8"/>
<path d="M648 979 H654 L651 982.8Z" fill="#222"/>
<rect x="660.5" y="973.5" width="15.5" height="15" rx="1" fill="#f4f4f4" stroke="#555" stroke-width="1"/>
<rect x="661.8" y="974.8" width="1.9" height="1.9" fill="#ddd"/>
<rect x="661.8" y="977.7" width="1.9" height="1.9" fill="#ccc"/>
<rect x="661.8" y="980.6" width="1.9" height="1.9" fill="#aaa"/>
<rect x="661.8" y="983.5" width="1.9" height="1.9" fill="#999"/>
<rect x="661.8" y="986.4" width="1.9" height="1.9" fill="#888"/>
<rect x="664.7" y="974.8" width="1.9" height="1.9" fill="#ddd"/>
<rect x="664.7" y="977.7" width="1.9" height="1.9" fill="#ccc"/>
<rect x="664.7" y="980.6" width="1.9" height="1.9" fill="#aaa"/>
<rect x="664.7" y="983.5" width="1.9" height="1.9" fill="#999"/>
<rect x="664.7" y="986.4" width="1.9" height="1.9" fill="#888"/>
<rect x="667.6" y="974.8" width="1.9" height="1.9" fill="#ddd"/>
<rect x="667.6" y="977.7" width="1.9" height="1.9" fill="#ccc"/>
<rect x="667.6" y="980.6" width="1.9" height="1.9" fill="#aaa"/>
<rect x="667.6" y="983.5" width="1.9" height="1.9" fill="#999"/>
<rect x="667.6" y="986.4" width="1.9" height="1.9" fill="#888"/>
<rect x="670.5" y="974.8" width="1.9" height="1.9" fill="#ddd"/>
<rect x="670.5" y="977.7" width="1.9" height="1.9" fill="#ccc"/>
<rect x="670.5" y="980.6" width="1.9" height="1.9" fill="#aaa"/>
<rect x="670.5" y="983.5" width="1.9" height="1.9" fill="#999"/>
<rect x="670.5" y="986.4" width="1.9" height="1.9" fill="#888"/>
<rect x="673.4" y="974.8" width="1.9" height="1.9" fill="#ddd"/>
<rect x="673.4" y="977.7" width="1.9" height="1.9" fill="#ccc"/>
<rect x="673.4" y="980.6" width="1.9" height="1.9" fill="#aaa"/>
<rect x="673.4" y="983.5" width="1.9" height="1.9" fill="#999"/>
<rect x="673.4" y="986.4" width="1.9" height="1.9" fill="#888"/>
<path d="M661 976.8 H676 M661 979.7 H676 M661 982.6 H676 M661 985.5 H676 M663.2 974 V988.5 M666.1 974 V988.5 M669 974 V988.5 M671.9 974 V988.5 M674.8 974 V988.5" stroke="#777" stroke-width="0.9"/>
<path d="M679 979 H685 L682 982.8Z" fill="#222"/>
<rect x="691" y="974" width="15" height="13.5" rx="1" fill="#2f3a5a"/>
<rect x="692.3" y="975.3" width="5.6" height="4.9" fill="#8cc4ee"/>
<rect x="699.3" y="975.3" width="5.6" height="4.9" fill="#8cc4ee"/>
<rect x="692.3" y="981.5" width="5.6" height="4.9" fill="#8cc4ee"/>
<rect x="699.3" y="981.5" width="5.6" height="4.9" fill="#8cc4ee"/>
<path d="M710 979 H716 L713 982.8Z" fill="#222"/>
</svg>
<div class="a" style="left:0;top:997px;width:1202px;height:1px;background:#c8c8c8"></div>
<div class="a" style="left:0;top:998px;width:1202px;height:42px;background:#f2f2f2"></div>
<svg class="a" style="left:0;top:998px" width="1202" height="42" viewBox="0 998 1202 42">
<rect x="12" y="1015.4" width="2" height="13.3" fill="#4a4a4a"/><path d="M14.2 1022 L24.1 1015.4 V1028.7Z" fill="#4a4a4a"/>
<path d="M36.3 1022 L45.8 1015.5 V1028.5Z" fill="#4a4a4a"/><rect x="47" y="1018.5" width="1.8" height="7" fill="#4a4a4a"/>
<path d="M62 1014.8 V1029.2 L73.7 1022Z" fill="#4a4a4a"/>
<rect x="86" y="1018.5" width="1.8" height="7" fill="#4a4a4a"/><path d="M89 1015.5 V1028.5 L98.7 1022Z" fill="#4a4a4a"/>
<path d="M112 1015.4 V1028.7 L122.1 1022Z" fill="#4a4a4a"/><rect x="122.3" y="1015.4" width="2" height="13.3" fill="#4a4a4a"/>
<rect x="145" y="1005" width="19.7" height="5.8" fill="#e2b2e2"/>
<rect x="148" y="1014" width="13" height="13" fill="none" stroke="#555" stroke-width="0.9" stroke-dasharray="2 1.4"/>
<rect x="146.8" y="1012.8" width="2.4" height="2.4" fill="#1a8fd6"/>
<rect x="159.8" y="1012.8" width="2.4" height="2.4" fill="#1a8fd6"/>
<rect x="146.8" y="1025.8" width="2.4" height="2.4" fill="#1a8fd6"/>
<path d="M162.5 1021.5 L157 1028" stroke="#e8a23a" stroke-width="2.6"/><path d="M162.3 1021.3 L163.6 1020" stroke="#c8553d" stroke-width="2.6"/>
<path d="M161 1007 H173 V1011.5 L168.2 1016 H165.8 L161 1011.5Z" fill="#5a5a5a"/><rect x="166" y="1011" width="2" height="28.5" fill="#5a5a5a"/>
<rect x="155.5" y="1032" width="1.3" height="7" fill="#c8c8c8"/>
<polygon points="1188.38,1020.56 1188.38,1023.44 1185.97,1023.35 1185.18,1025.26 1186.94,1026.91 1184.91,1028.94 1183.26,1027.18 1181.35,1027.97 1181.44,1030.38 1178.56,1030.38 1178.65,1027.97 1176.74,1027.18 1175.09,1028.94 1173.06,1026.91 1174.82,1025.26 1174.03,1023.35 1171.62,1023.44 1171.62,1020.56 1174.03,1020.65 1174.82,1018.74 1173.06,1017.09 1175.09,1015.06 1176.74,1016.82 1178.65,1016.03 1178.56,1013.62 1181.44,1013.62 1181.35,1016.03 1183.26,1016.82 1184.91,1015.06 1186.94,1017.09 1185.18,1018.74 1185.97,1020.65" fill="#999"/><circle cx="1180" cy="1022" r="2.81" fill="#f2f2f2"/>
</svg>
<div class="a" style="left:0;top:1040px;width:1202px;height:8px;background:#3a2a28"></div>
<div class="a" style="left:87px;top:1040px;width:48px;height:8px;background:#5a4452"></div>
<div class="a" style="left:0;top:0;width:1202px;height:1px;background:#2b3050"></div>
<div class="a" style="left:0;top:0;width:1px;height:1040px;background:#2a2a46"></div>
<div class="a" style="left:1201px;top:0;width:1px;height:1040px;background:#2b3050"></div>
</body></html>
